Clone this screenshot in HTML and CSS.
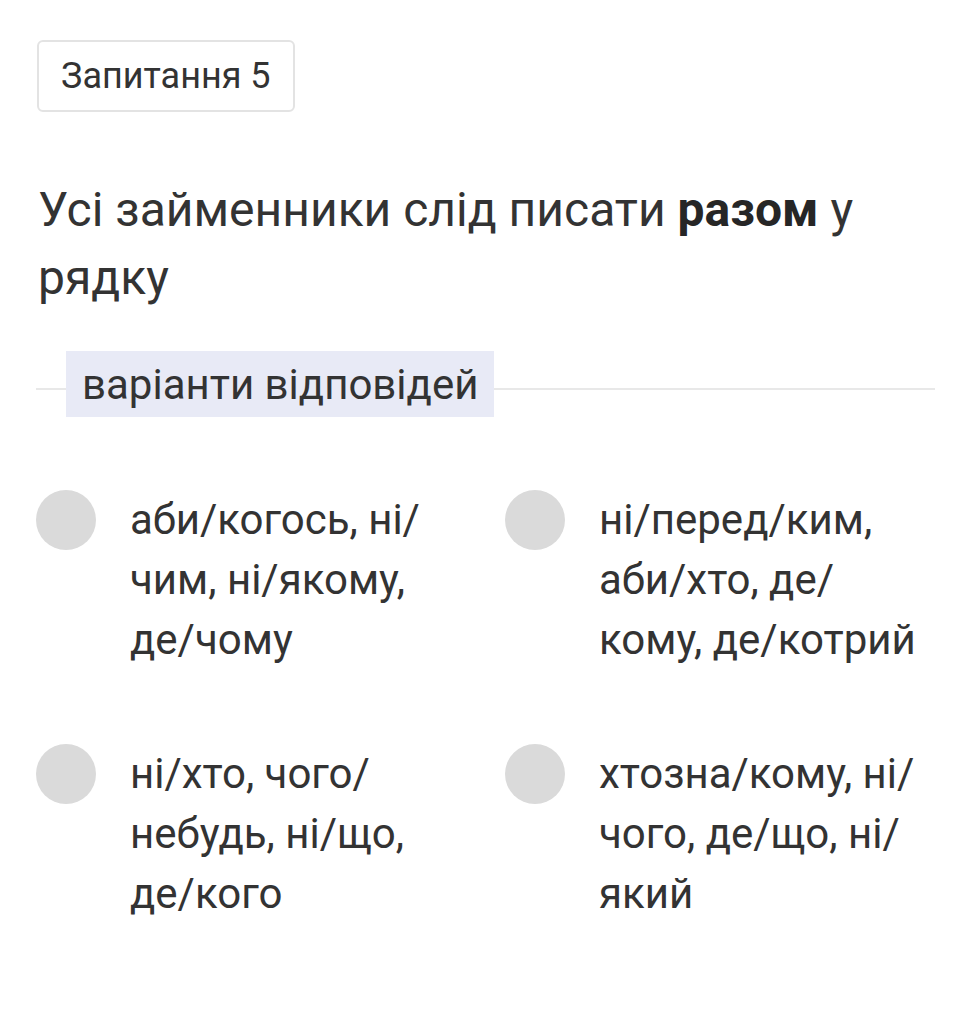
FILE: index.html
```html
<!DOCTYPE html>
<html lang="uk">
<head>
<meta charset="utf-8">
<link rel="stylesheet" href="styles.css">
</head>
<body>
<div class="page">
  <div class="badge">Запитання 5</div>
  <div class="question">Усі займенники слід писати <b>разом</b> у рядку</div>
  <div class="divider">
    <span class="divider-label">варіанти відповідей</span>
  </div>
  <div class="options">
    <div class="option"><span class="radio"></span><span class="opt-text">аби/когось, ні/ чим, ні/якому, де/чому</span></div>
    <div class="option"><span class="radio"></span><span class="opt-text">ні/перед/ким, аби/хто, де/ кому, де/котрий</span></div>
    <div class="option"><span class="radio"></span><span class="opt-text">ні/хто, чого/ небудь, ні/що, де/кого</span></div>
    <div class="option"><span class="radio"></span><span class="opt-text">хтозна/кому, ні/ чого, де/що, ні/ який</span></div>
  </div>
</div>
</body>
</html>
```
FILE: styles.css
```css
html, body {
  margin: 0;
  padding: 0;
  background: #ffffff;
}
body {
  font-family: Roboto, "Noto Sans", sans-serif;
  color: #333333;
}
.page {
  padding: 40px 36px 0 36px;
}
.badge {
  display: inline-flex;
  align-items: center;
  box-sizing: border-box;
  height: 72px;
  margin-left: 1px;
  padding: 0 22px;
  border: 2px solid #e3e3e3;
  border-radius: 6px;
  font-size: 36px;
  color: #333333;
}
.question {
  margin-top: 64px;
  font-size: 48px;
  line-height: 68px;
  max-width: 860px;
  padding-left: 2px;
}
.question b {
  font-weight: 700;
  color: #262626;
}
.divider {
  position: relative;
  margin-top: 39px;
  height: 66px;
  display: flex;
  align-items: center;
}
.divider::before {
  content: "";
  position: absolute;
  left: 0;
  right: 0;
  top: 37px;
  height: 2px;
  background: #e8e8e8;
}
.divider-label {
  position: relative;
  margin-left: 30px;
  height: 66px;
  display: flex;
  align-items: center;
  padding: 0 16px;
  background: #e8eaf6;
  font-size: 42px;
}
.options {
  margin-top: 73px;
  display: grid;
  grid-template-columns: 469px 1fr;
  row-gap: 74px;
}
.option {
  display: flex;
  align-items: flex-start;
  gap: 34px;
}
.radio {
  flex: 0 0 60px;
  width: 60px;
  height: 60px;
  border-radius: 50%;
  background: #dadada;
}
.opt-text {
  font-size: 42px;
  line-height: 60px;
  max-width: 330px;
}
```
